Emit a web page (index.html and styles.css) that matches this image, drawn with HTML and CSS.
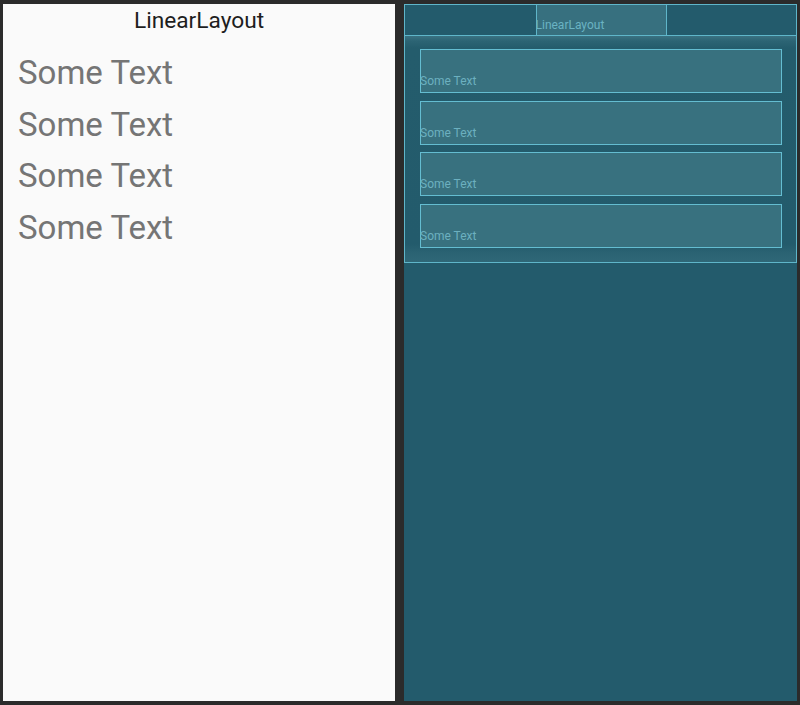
FILE: index.html
```html
<!DOCTYPE html>
<html>
<head>
<meta charset="utf-8">
<link rel="stylesheet" href="styles.css">
</head>
<body>
<div class="stage">
  <div class="design">
    <div class="title">LinearLayout</div>
    <div class="list">
      <div class="item">Some Text</div>
      <div class="item">Some Text</div>
      <div class="item">Some Text</div>
      <div class="item">Some Text</div>
    </div>
  </div>
  <div class="blueprint">
    <div class="root">
      <div class="bp-header">
        <div class="bp-title"><span>LinearLayout</span></div>
      </div>
      <div class="bp-body">
        <div class="bp-item"><span>Some Text</span></div>
        <div class="bp-item"><span>Some Text</span></div>
        <div class="bp-item"><span>Some Text</span></div>
        <div class="bp-item"><span>Some Text</span></div>
      </div>
    </div>
  </div>
</div>
</body>
</html>
```
FILE: styles.css
```css
html, body {
  margin: 0;
  padding: 0;
  background: #2b2b2b;
  font-family: Roboto, "Liberation Sans", sans-serif;
}
.stage {
  display: flex;
  padding: 4px 3px 4px 3px;
  gap: 9px;
  height: 705px;
  box-sizing: border-box;
}
.design {
  width: 392px;
  height: 697px;
  background: #fafafa;
}
.title {
  height: 31px;
  text-align: center;
  font-size: 22.7px;
  line-height: 33px;
  color: #1e1e1e;
}
.list {
  padding: 14px 0 0 15px;
}
.item {
  height: 44px;
  box-sizing: border-box;
  padding-top: 5px;
  line-height: 38px;
  font-size: 33px;
  color: #757575;
  margin-bottom: 7.67px;
}
.blueprint {
  width: 393px;
  height: 697px;
  background: #235b6c;
}
.root {
  border: 1px solid #5fb6ca;
  height: 259px;
  box-sizing: border-box;
}
.bp-header {
  height: 30px;
  border-bottom: 1px solid #5fb6ca;
  display: flex;
  justify-content: center;
  padding-left: 1px;
}
.bp-title {
  width: 131px;
  box-sizing: border-box;
  background: #37707f;
  border-left: 1px solid #5fb6ca;
  border-right: 1px solid #5fb6ca;
  display: flex;
  align-items: flex-end;
  padding-bottom: 4px;
  font-size: 12px;
  line-height: 12px;
  color: #6ab3c3;
}
.bp-title span {
  margin-left: -1px;
}
.bp-body {
  padding: 13px 14px 0 15px;
  height: 226px;
  box-sizing: border-box;
  background: linear-gradient(to bottom, #3a7282 0px, #2c6474 5px, #245c6c 12px, #235b6c 208px, #2a6272 216px, #2f6777 226px);
}
.bp-item {
  height: 44px;
  box-sizing: border-box;
  border: 1px solid #64bdd1;
  background: #38717f;
  margin-bottom: 7.67px;
  display: flex;
  align-items: flex-end;
  padding-bottom: 5px;
  font-size: 12px;
  line-height: 12px;
  color: #6cb0bf;
}
.bp-item span {
  margin-left: -1px;
}
```
